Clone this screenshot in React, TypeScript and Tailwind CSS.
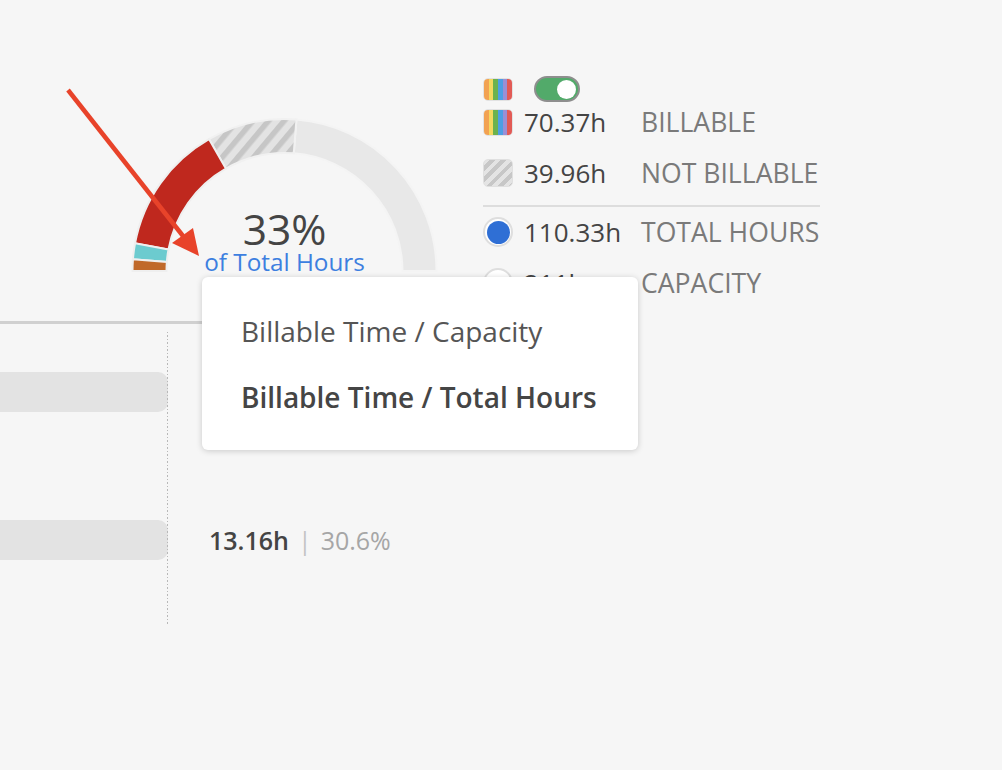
import React from "react";

const CX = 156.5;
const CY = 155;
const RO = 152;
const RI = 118;

function pt(r: number, deg: number) {
  const a = (deg * Math.PI) / 180;
  return [CX + r * Math.cos(a), CY - r * Math.sin(a)];
}

function sector(a1: number, a2: number) {
  const [ox1, oy1] = pt(RO, a1);
  const [ox2, oy2] = pt(RO, a2);
  const [ix2, iy2] = pt(RI, a2);
  const [ix1, iy1] = pt(RI, a1);
  const large = Math.abs(a1 - a2) > 180 ? 1 : 0;
  return `M ${ox1} ${oy1} A ${RO} ${RO} 0 ${large} 1 ${ox2} ${oy2} L ${ix2} ${iy2} A ${RI} ${RI} 0 ${large} 0 ${ix1} ${iy1} Z`;
}

function Gauge() {
  return (
    <div className="relative ml-[128px] mt-[40px] h-[158px] w-[313px]">
      <svg width="313" height="158" viewBox="0 0 313 158" className="block">
        <defs>
          <pattern id="hatch" patternUnits="userSpaceOnUse" width="12" height="12" patternTransform="rotate(40)">
            <rect width="12" height="12" fill="#e3e3e3" />
            <rect width="5.5" height="12" fill="#c6c6c6" />
          </pattern>
        </defs>
        <path d={sector(85.5, 0)} fill="#e8e8e8" stroke="#f4f4f4" strokeWidth="2" />
        <path d={sector(119.8, 85.5)} fill="url(#hatch)" stroke="#f1f1f1" strokeWidth="2" />
        <path d={sector(169.5, 119.8)} fill="#bf281e" stroke="#efefef" strokeWidth="2" />
        <path d={sector(175.6, 169.5)} fill="#6ccbcf" stroke="#efefef" strokeWidth="2" />
        <path d={sector(180, 175.6)} fill="#c0692a" stroke="#efefef" strokeWidth="2" />
      </svg>
      <div className="absolute left-0 right-0 top-[93px] text-center text-[42.5px] leading-[40px] text-[#444444]">
        33%
      </div>
      <div className="absolute left-0 right-0 top-[135px] text-center text-[24.3px] leading-[22px] text-[#3d7fe0]">
        of Total Hours
      </div>
    </div>
  );
}

function Rainbow({ h }: { h: string }) {
  const colors = ["bg-[#f2a252]", "bg-[#f4d860]", "bg-[#6cb24e]", "bg-[#4d9fe4]", "bg-[#9b8fd5]", "bg-[#e25a55]"];
  return (
    <div className={`flex w-[30px] overflow-hidden rounded-[5px] border border-[#e2e2e2] ${h}`}>
      {colors.map((c, i) => (
        <div key={i} className={`h-full flex-1 ${c}`} />
      ))}
    </div>
  );
}

function Row({
  icon,
  value,
  label,
  className,
}: {
  icon: React.ReactNode;
  value: string;
  label: string;
  className: string;
}) {
  return (
    <div className={`flex h-[36px] items-center ${className}`}>
      <div className="flex w-[30px] justify-center">{icon}</div>
      <div className="ml-[11px] w-[117px] text-[26px] leading-[36px] text-[#444444]">{value}</div>
      <div className="text-[26.6px] font-medium leading-[36px] text-[#7a7a7a]">{label}</div>
    </div>
  );
}

function Legend() {
  return (
    <div className="ml-[42px] flex flex-col">
      <div className="flex h-[26px] items-center">
        <Rainbow h="h-[23px]" />
        <div className="ml-[21px] flex h-[26px] w-[46px] items-center justify-end rounded-full border-2 border-[#8e8e8e] bg-[#52aa6a] pr-[2px]">
          <div className="h-[19px] w-[19px] rounded-full bg-white" />
        </div>
      </div>
      <Row className="mt-[2px]" icon={<Rainbow h="h-[27px]" />} value="70.37h" label="BILLABLE" />
      <Row
        className="mt-[15px]"
        icon={
          <div className="h-[28px] w-[30px] rounded-[5px] border border-[#e0e0e0] bg-[repeating-linear-gradient(135deg,#e4e4e4_0px,#e4e4e4_4px,#c7c7c7_4px,#c7c7c7_8px)]" />
        }
        value="39.96h"
        label="NOT BILLABLE"
      />
      <div className="mt-[14px] h-[2px] w-[337px] bg-[#dddddd]" />
      <Row
        className="mt-[7px]"
        icon={
          <div className="flex h-[30px] w-[30px] items-center justify-center rounded-full border-2 border-[#dedede] bg-white">
            <div className="h-[23px] w-[23px] rounded-full bg-[#2f6fd5]" />
          </div>
        }
        value="110.33h"
        label="TOTAL HOURS"
      />
      <Row
        className="mt-[15px]"
        icon={<div className="h-[30px] w-[30px] rounded-full border-2 border-[#dedede] bg-white" />}
        value="211h"
        label="CAPACITY"
      />
    </div>
  );
}

export default function App() {
  return (
    <div className="relative h-[770px] w-[1002px] overflow-hidden bg-[#f6f6f6] font-['Open_Sans',sans-serif]">
      <div className="flex h-[321px] items-start pt-[76px]">
        <Gauge />
        <Legend />
      </div>
      <div className="h-[3px] w-[420px] bg-[#d0d0d0]" />
      <div className="flex">
        <div className="flex w-[168px] flex-col">
          <div className="mt-[48px] h-[40px] w-[168px] rounded-r-[10px] bg-[#e3e3e3]" />
          <div className="mt-[108px] h-[40px] w-[168px] rounded-r-[10px] bg-[#e3e3e3]" />
        </div>
        <div className="ml-[-1px] mt-[8px] h-[294px] w-px bg-[repeating-linear-gradient(to_bottom,#b8b8b8_0px,#b8b8b8_1.5px,transparent_1.5px,transparent_3.5px)]" />
        <div className="ml-[41px] mt-[200px] text-[25px] leading-[32px]">
          <span className="font-semibold text-[#444444]">13.16h</span>
          <span className="mx-[9px] text-[#c4c4c4]">|</span>
          <span className="text-[#a6a6a6]">30.6%</span>
        </div>
      </div>

      {/* dropdown menu */}
      <div className="absolute left-[202px] top-[277px] h-[173px] w-[436px] rounded-[6px] bg-white shadow-[0_1px_6px_rgba(0,0,0,0.18)]">
        <div className="absolute left-[39px] top-[40px] text-[28px] leading-[28px] text-[#555555]">
          Billable Time / Capacity
        </div>
        <div className="absolute left-[39px] top-[106px] text-[28px] font-semibold leading-[28px] text-[#454545]">
          Billable Time / Total Hours
        </div>
      </div>

      {/* annotation arrow */}
      <svg className="pointer-events-none absolute left-0 top-0" width="1002" height="770">
        <line x1="68" y1="90" x2="183" y2="236" stroke="#e8432a" strokeWidth="4.5" />
        <polygon points="199,256 172,243 193,228" fill="#e8432a" />
      </svg>
    </div>
  );
}
